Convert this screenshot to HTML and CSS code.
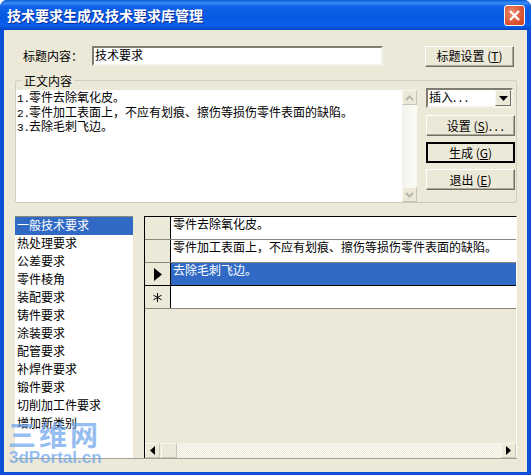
FILE: index.html
```html
<!DOCTYPE html>
<html lang="zh-CN">
<head>
    <meta charset="UTF-8">
    <title>技术要求生成及技术要求库管理</title>
    <link rel="stylesheet" href="styles.css">
</head>
<body>
<div class="window">
    <div class="titlebar">
        <span class="title-text">技术要求生成及技术要求库管理</span>
        <span class="close-btn">
            <svg width="13" height="13" viewBox="0 0 13 13"><path d="M2 2 L11 11 M11 2 L2 11" stroke="#fff" stroke-width="2.4" fill="none"/></svg>
        </span>
    </div>

    <div class="client">
        <!-- title row -->
        <div class="title-row">
            <span class="title-label">标题内容：</span>
            <div class="input sunken">技术要求</div>
            <div class="btn btn-title">标题设置 (<u>T</u>)</div>
        </div>

        <!-- body text group -->
        <div class="group">
            <span class="group-label">正文内容</span>
            <div class="body-box">
                <div class="body-text">
                    <div><span class="num">1.</span>零件去除氧化皮。</div>
                    <div><span class="num">2.</span>零件加工表面上，不应有划痕、擦伤等损伤零件表面的缺陷。</div>
                    <div><span class="num">3.</span>去除毛刺飞边。</div>
                </div>
                <div class="vscroll">
                    <div class="sbtn"><svg width="9" height="6" viewBox="0 0 9 6"><path d="M1 5 L4.5 1.5 L8 5" stroke="#b4b8ac" stroke-width="2" fill="none"/></svg></div>
                    <div class="vtrack"></div>
                    <div class="sbtn"><svg width="9" height="6" viewBox="0 0 9 6"><path d="M1 1 L4.5 4.5 L8 1" stroke="#b4b8ac" stroke-width="2" fill="none"/></svg></div>
                </div>
            </div>
            <div class="side">
                <div class="select sunken">
                    <span class="select-text">插入<span class="dots">...</span></span>
                    <span class="select-arrow"><svg width="9" height="5" viewBox="0 0 9 5"><path d="M0 0 H9 L4.5 5 Z" fill="#000"/></svg></span>
                </div>
                <div class="btn btn-side btn-more">设置 (<u>S</u>)<span class="dots">...</span></div>
                <div class="btn btn-side btn-default">生成 (<u>G</u>)</div>
                <div class="btn btn-side">退出 (<u>E</u>)</div>
            </div>
        </div>

        <!-- category list and table -->
        <div class="lower">
            <div class="list">
                <div class="list-item selected">一般技术要求</div>
                <div class="list-item">热处理要求</div>
                <div class="list-item">公差要求</div>
                <div class="list-item">零件棱角</div>
                <div class="list-item">装配要求</div>
                <div class="list-item">铸件要求</div>
                <div class="list-item">涂装要求</div>
                <div class="list-item">配管要求</div>
                <div class="list-item">补焊件要求</div>
                <div class="list-item">锻件要求</div>
                <div class="list-item">切削加工件要求</div>
                <div class="list-item">增加新类别</div>
            </div>
            <div class="table">
                <div class="rows">
                    <div class="row"><div class="row-head"></div><div class="cell">零件去除氧化皮。</div></div>
                    <div class="row"><div class="row-head"></div><div class="cell">零件加工表面上，不应有划痕、擦伤等损伤零件表面的缺陷。</div></div>
                    <div class="row"><div class="row-head"><svg width="8" height="13" viewBox="0 0 8 13"><path d="M0 0 L8 6.5 L0 13 Z" fill="#000"/></svg></div><div class="cell current">去除毛刺飞边。</div></div>
                    <div class="row"><div class="row-head"><svg width="9" height="9" viewBox="0 0 9 9"><path d="M4.5 0 V9 M0.5 2.2 L8.5 6.8 M8.5 2.2 L0.5 6.8" stroke="#000" stroke-width="1" fill="none"/></svg></div><div class="cell"></div></div>
                </div>
                <div class="hscroll">
                    <div class="sbtn hbtn"><svg width="5" height="9" viewBox="0 0 5 9"><path d="M5 0 V9 L0 4.5 Z" fill="#000"/></svg></div>
                    <div class="sbtn hthumb"></div>
                    <div class="htrack"></div>
                    <div class="sbtn hbtn"><svg width="5" height="9" viewBox="0 0 5 9"><path d="M0 0 V9 L5 4.5 Z" fill="#000"/></svg></div>
                </div>
            </div>
        </div>
    </div>

    <!-- site watermark -->
    <div class="watermark">
        <div class="wm-big">三维网</div>
        <div class="wm-small">3dPortal.cn</div>
    </div>
</div>
</body>
</html>
```

FILE: styles.css
```css
html, body {
    margin: 0;
    padding: 0;
}

body {
    width: 531px;
    height: 475px;
    overflow: hidden;
    background: #fff;
    font-family: "Noto Sans CJK SC", "Liberation Sans", sans-serif;
    font-size: 12px;
    color: #000;
}

.window {
    position: relative;
    width: 531px;
    height: 475px;
    box-sizing: border-box;
    display: flex;
    flex-direction: column;
    background: #0a4fd6;
    border-radius: 7px 7px 0 0;
    overflow: hidden;
}

.titlebar {
    height: 30px;
    flex: none;
    display: flex;
    align-items: center;
    justify-content: space-between;
    padding: 0 6px 0 7px;
    background: linear-gradient(180deg, #0a5ad8 0%, #3a8cf4 10%, #0f62e6 22%, #0658e2 60%, #0a5fec 85%, #0546c4 100%);
}

.title-text {
    color: #fff;
    font-size: 14px;
    font-weight: 700;
    line-height: 16px;
    text-shadow: 1px 1px 0 #0a2f9a;
}

.close-btn {
    width: 19px;
    height: 19px;
    display: flex;
    align-items: center;
    justify-content: center;
    border: 1px solid #fff;
    border-radius: 3px;
    background: radial-gradient(circle at 35% 35%, #ec8a6c, #d64a26 75%);
}

.client {
    flex: 1;
    margin: 0 4px 3px 4px;
    padding: 16px 10px 0 11px;
    background: #ece9d8;
    display: flex;
    flex-direction: column;
    line-height: 14px;
}

.sunken {
    box-sizing: border-box;
    background: #fff;
    border: 2px solid;
    border-color: #7f7d72 #f4f2e8 #f4f2e8 #7f7d72;
}

.title-row {
    display: flex;
    align-items: center;
    height: 20px;
}

.title-label {
    width: 77px;
    padding-left: 8px;
    box-sizing: border-box;
    font-family: "Noto Sans CJK TC", sans-serif;
}

.input {
    width: 291px;
    height: 20px;
    padding-left: 1px;
    line-height: 14px;
}

.btn {
    box-sizing: border-box;
    display: flex;
    align-items: center;
    justify-content: center;
    white-space: pre;
    background: #ece9d8;
    border: 1px solid;
    border-color: #fff #716f64 #716f64 #fff;
    box-shadow: inset -1px -1px 0 #aca899;
}

.btn-title {
    width: 89px;
    height: 21px;
    margin-left: 42px;
}

.group {
    position: relative;
    margin-top: 14px;
    height: 123px;
    box-sizing: border-box;
    border: 1px solid #d0d0bf;
    border-bottom-color: #c8c6b6;
    border-radius: 3px;
    padding-top: 9px;
    display: flex;
}

.group-label {
    position: absolute;
    left: 6px;
    top: -7px;
    padding: 0 2px;
    background: #ece9d8;
}

.body-box {
    width: 401px;
    height: 112px;
    flex: none;
    display: flex;
    background: #fff;
}

.body-text {
    flex: 1;
    padding: 1px 0 0 1px;
    font-size: 12px;
    line-height: 12.5px;
}

.num {
    display: inline-block;
    width: 12px;
    font-family: "Liberation Mono", monospace;
    font-size: 11px;
}

.dots {
    letter-spacing: 2.5px;
}

.vscroll {
    width: 15px;
    display: flex;
    flex-direction: column;
}

.vtrack {
    flex: 1;
    background: linear-gradient(90deg, #f3f2ea, #fbfbf8);
}

.sbtn {
    box-sizing: border-box;
    width: 15px;
    height: 15px;
    flex: none;
    display: flex;
    align-items: center;
    justify-content: center;
    background: #ece9d8;
    border: 1px solid;
    border-color: #f8f7f0 #c8c6b6 #c8c6b6 #f8f7f0;
}

.side {
    width: 90px;
    margin-left: 9px;
    margin-top: -2px;
    display: flex;
    flex-direction: column;
}

.select {
    width: 87px;
    height: 20px;
    display: flex;
    justify-content: space-between;
}

.select-text {
    padding-left: 1px;
    line-height: 14px;
}

.select-arrow {
    box-sizing: border-box;
    width: 16px;
    display: flex;
    align-items: center;
    justify-content: center;
    background: #ece9d8;
    border: 1px solid;
    border-color: #f8f7f0 #716f64 #716f64 #f8f7f0;
}

.btn-side {
    width: 89px;
    height: 21px;
    margin-top: 7px;
}

.btn-side + .btn-side {
    margin-top: 6px;
}

.btn-more {
    padding-left: 12px;
}

.btn-default {
    border: 2px solid #000;
    box-shadow: none;
}

.lower {
    margin-top: 13px;
    height: 242px;
    display: flex;
    border-bottom: 1px solid #a5a398;
}

.list {
    width: 118px;
    flex: none;
    background: #fff;
    border-top: 1px solid #8a887c;
    overflow: hidden;
}

.list-item {
    height: 18px;
    padding-left: 2px;
    line-height: 14px;
    padding-top: 1px;
    box-sizing: border-box;
    white-space: nowrap;
}

.list-item.selected {
    background: #316ac5;
    color: #fff;
}

.table {
    margin-left: 11px;
    flex: 1;
    display: flex;
    flex-direction: column;
    border-left: 1px solid #000;
    border-top: 1px solid #000;
    border-right: 1px solid #fff;
}

.rows {
    flex: 1;
}

.row {
    display: flex;
    height: 23px;
    box-sizing: border-box;
    border-bottom: 1px solid #8a887c;
}

.row:nth-child(3) {
    border-bottom-color: #000;
}

.row-head {
    width: 25px;
    flex: none;
    display: flex;
    align-items: center;
    justify-content: center;
    background: #ece9d8;
    border-right: 1px solid #000;
}

.cell {
    flex: 1;
    background: #fff;
    padding-left: 2px;
    white-space: nowrap;
}

.cell.current {
    background: #316ac5;
    color: #fff;
}

.hscroll {
    height: 15px;
    display: flex;
    background: #ece9d8;
}

.hthumb {
    width: 16px;
    margin-left: 1px;
}

.htrack {
    flex: 1;
    background-color: #f6f5ee;
    background-image: repeating-conic-gradient(#ece9d8 0 25%, #fbfaf5 0 50%);
    background-size: 2px 2px;
}

.watermark {
    position: absolute;
    left: 8px;
    top: 419px;
    color: rgba(110, 165, 235, 0.72);
    pointer-events: none;
}

.wm-big {
    font-size: 28px;
    font-weight: 700;
    line-height: 31px;
    letter-spacing: 3px;
}

.wm-small {
    font-family: "Liberation Sans", sans-serif;
    font-size: 17px;
    font-weight: 700;
    line-height: 16px;
    padding-left: 1px;
}
```
